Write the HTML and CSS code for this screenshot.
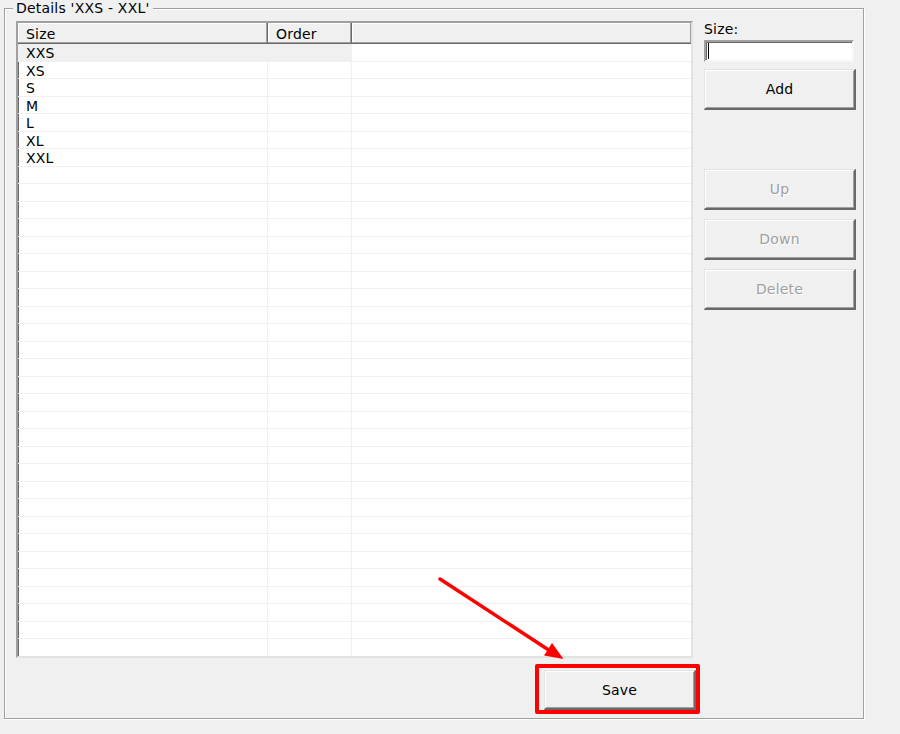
FILE: index.html
```html
<!DOCTYPE html>
<html>
<head>
<meta charset="utf-8">
<link rel="stylesheet" href="styles.css">
</head>
<body>
<fieldset class="group">
  <legend class="group-title">Details 'XXS - XXL'</legend>
  <div class="content">
    <div class="main">
      <div class="list">
        <div class="list-head">
          <div class="hcell c-size">Size</div>
          <div class="hcell c-order">Order</div>
          <div class="hcell c-rest"></div>
        </div>
        <div class="rows" id="rows">
          <div class="row selected"><div class="cell c-size">XXS</div><div class="cell c-order"></div><div class="cell c-rest"></div></div>
          <div class="row"><div class="cell c-size">XS</div><div class="cell c-order"></div><div class="cell c-rest"></div></div>
          <div class="row"><div class="cell c-size">S</div><div class="cell c-order"></div><div class="cell c-rest"></div></div>
          <div class="row"><div class="cell c-size">M</div><div class="cell c-order"></div><div class="cell c-rest"></div></div>
          <div class="row"><div class="cell c-size">L</div><div class="cell c-order"></div><div class="cell c-rest"></div></div>
          <div class="row"><div class="cell c-size">XL</div><div class="cell c-order"></div><div class="cell c-rest"></div></div>
          <div class="row"><div class="cell c-size">XXL</div><div class="cell c-order"></div><div class="cell c-rest"></div></div>
          <div class="row"><div class="cell c-size"></div><div class="cell c-order"></div><div class="cell c-rest"></div></div>
          <div class="row"><div class="cell c-size"></div><div class="cell c-order"></div><div class="cell c-rest"></div></div>
          <div class="row"><div class="cell c-size"></div><div class="cell c-order"></div><div class="cell c-rest"></div></div>
          <div class="row"><div class="cell c-size"></div><div class="cell c-order"></div><div class="cell c-rest"></div></div>
          <div class="row"><div class="cell c-size"></div><div class="cell c-order"></div><div class="cell c-rest"></div></div>
          <div class="row"><div class="cell c-size"></div><div class="cell c-order"></div><div class="cell c-rest"></div></div>
          <div class="row"><div class="cell c-size"></div><div class="cell c-order"></div><div class="cell c-rest"></div></div>
          <div class="row"><div class="cell c-size"></div><div class="cell c-order"></div><div class="cell c-rest"></div></div>
          <div class="row"><div class="cell c-size"></div><div class="cell c-order"></div><div class="cell c-rest"></div></div>
          <div class="row"><div class="cell c-size"></div><div class="cell c-order"></div><div class="cell c-rest"></div></div>
          <div class="row"><div class="cell c-size"></div><div class="cell c-order"></div><div class="cell c-rest"></div></div>
          <div class="row"><div class="cell c-size"></div><div class="cell c-order"></div><div class="cell c-rest"></div></div>
          <div class="row"><div class="cell c-size"></div><div class="cell c-order"></div><div class="cell c-rest"></div></div>
          <div class="row"><div class="cell c-size"></div><div class="cell c-order"></div><div class="cell c-rest"></div></div>
          <div class="row"><div class="cell c-size"></div><div class="cell c-order"></div><div class="cell c-rest"></div></div>
          <div class="row"><div class="cell c-size"></div><div class="cell c-order"></div><div class="cell c-rest"></div></div>
          <div class="row"><div class="cell c-size"></div><div class="cell c-order"></div><div class="cell c-rest"></div></div>
          <div class="row"><div class="cell c-size"></div><div class="cell c-order"></div><div class="cell c-rest"></div></div>
          <div class="row"><div class="cell c-size"></div><div class="cell c-order"></div><div class="cell c-rest"></div></div>
          <div class="row"><div class="cell c-size"></div><div class="cell c-order"></div><div class="cell c-rest"></div></div>
          <div class="row"><div class="cell c-size"></div><div class="cell c-order"></div><div class="cell c-rest"></div></div>
          <div class="row"><div class="cell c-size"></div><div class="cell c-order"></div><div class="cell c-rest"></div></div>
          <div class="row"><div class="cell c-size"></div><div class="cell c-order"></div><div class="cell c-rest"></div></div>
          <div class="row"><div class="cell c-size"></div><div class="cell c-order"></div><div class="cell c-rest"></div></div>
          <div class="row"><div class="cell c-size"></div><div class="cell c-order"></div><div class="cell c-rest"></div></div>
          <div class="row"><div class="cell c-size"></div><div class="cell c-order"></div><div class="cell c-rest"></div></div>
          <div class="row"><div class="cell c-size"></div><div class="cell c-order"></div><div class="cell c-rest"></div></div>
          <div class="row"><div class="cell c-size"></div><div class="cell c-order"></div><div class="cell c-rest"></div></div>
        </div>
      </div>
      <div class="highlight">
        <button class="btn btn-save">Save</button>
      </div>
    </div>
    <div class="side">
      <label class="side-label">Size:</label>
      <div class="textbox"><span class="caret"></span></div>
      <button class="btn btn-add">Add</button>
      <button class="btn btn-up" disabled>Up</button>
      <button class="btn btn-gap" disabled>Down</button>
      <button class="btn btn-gap" disabled>Delete</button>
    </div>
  </div>
</fieldset>
<svg class="annotation" width="900" height="734" viewBox="0 0 900 734">
  <line x1="440" y1="579" x2="551" y2="651.5" stroke="#ff0000" stroke-width="3.5" stroke-linecap="round"/>
  <polygon points="563.5,659 544,655.5 552,643" fill="#ff0000"/>
</svg>
</body>
</html>
```

FILE: styles.css
```css
html, body {
  margin: 0;
  padding: 0;
  background: #f0f0f0;
}

body {
  position: relative;
  width: 900px;
  height: 734px;
  overflow: hidden;
  font-family: "DejaVu Sans", Verdana, sans-serif;
  font-size: 14px;
  letter-spacing: 0.2px;
  color: #000;
}

.group {
  margin: 0 0 0 4px;
  padding: 5px 0 0 11px;
  width: 860px;
  height: 719px;
  box-sizing: border-box;
  border: 1px solid #a0a0a0;
  box-shadow: 1px 1px 0 #ffffff, inset 1px 1px 0 #ffffff;
  min-width: 0;
}

.group-title {
  padding: 0 3px;
  margin-left: -3px;
  line-height: 16px;
  background: #f0f0f0;
}

.content {
  display: flex;
  gap: 4px;
}

.main {
  width: 684px;
  display: flex;
  flex-direction: column;
}

.list {
  width: 677px;
  height: 637px;
  box-sizing: border-box;
  background: #ffffff;
  border-style: solid;
  border-width: 2px;
  border-color: #a0a0a0 #e3e3e3 #e3e3e3 #a0a0a0;
  box-shadow: inset 1px 1px 0 #696969;
  overflow: hidden;
}

.list-head {
  display: flex;
  height: 21px;
}

.hcell {
  box-sizing: border-box;
  height: 21px;
  background: #f0f0f0;
  border-right: 1px solid #696969;
  border-bottom: 1px solid #696969;
  box-shadow: inset -1px -1px 0 #a0a0a0, inset 1px 1px 0 #ffffff;
  padding-left: 8px;
  line-height: 22px;
}

.c-size { width: 250px; box-sizing: border-box; }
.c-order { width: 84px; box-sizing: border-box; }
.c-rest { flex: 1; box-sizing: border-box; }

.hcell.c-rest {
  border-right: none;
}

.row {
  display: flex;
  height: 17.5px;
  box-sizing: border-box;
  border-bottom: 1px solid #f0f0f0;
}

.cell {
  line-height: 19px;
  padding-left: 8px;
  border-right: 1px solid #f0f0f0;
  white-space: nowrap;
}

.cell.c-rest {
  border-right: none;
}

.row.selected .c-size,
.row.selected .c-order {
  background: #f0f0f0;
}

.highlight {
  align-self: flex-end;
  margin-top: 6px;
  border: 4px solid #ff0000;
  border-radius: 2px;
  padding: 2px 0 0 5px;
  display: flex;
}

.btn {
  display: block;
  box-sizing: border-box;
  width: 152px;
  height: 41px;
  margin: 0;
  padding: 0;
  font-family: "DejaVu Sans", Verdana, sans-serif;
  font-size: 14px;
  letter-spacing: 0.2px;
  color: #000;
  background: #f0f0f0;
  border-style: solid;
  border-width: 1px 2px 2px 1px;
  border-color: #e3e3e3 #696969 #696969 #e3e3e3;
  box-shadow: inset 1px 1px 0 #ffffff, inset -1px -1px 0 #a0a0a0;
  border-radius: 0;
}

.btn-save {
  height: 40px;
}

.btn:disabled {
  color: #a0a0a0;
  text-shadow: 1px 1px 0 #ffffff;
}

.side {
  width: 152px;
  display: flex;
  flex-direction: column;
}

.side-label {
  line-height: 16px;
  margin-bottom: 3px;
}

.textbox {
  width: 150px;
  height: 22px;
  box-sizing: border-box;
  background: #ffffff;
  border-style: solid;
  border-width: 2px;
  border-color: #a0a0a0 #f7f7f7 #f7f7f7 #a0a0a0;
  box-shadow: inset 1px 1px 0 #696969;
  padding: 1px 0 0 2px;
}

.caret {
  display: block;
  width: 1px;
  height: 16px;
  background: #000;
}

.btn-add {
  margin-top: 7px;
}

.btn-up {
  margin-top: 59px;
}

.btn-gap {
  margin-top: 9px;
}

.annotation {
  position: absolute;
  left: 0;
  top: 0;
  pointer-events: none;
}
```
